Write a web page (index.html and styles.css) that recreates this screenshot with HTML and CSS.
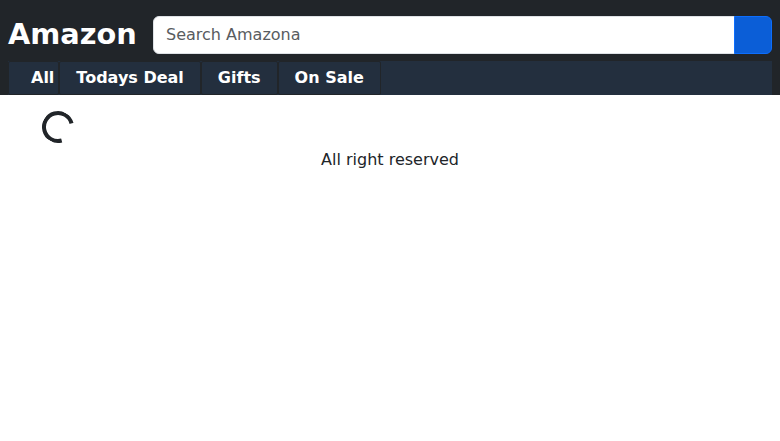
FILE: index.html
```
<!DOCTYPE html>
<html lang="en">
<head>
<meta charset="utf-8">
<title>Amazon</title>
<link rel="stylesheet" href="styles.css">
</head>
<body>
<header class="header">
  <div class="top">
    <a class="brand">Amazon</a>
    <form class="search">
      <input class="search-input" type="text" placeholder="Search Amazona" aria-label="Search Amazona">
      <button class="search-button" type="button" aria-label="Search"></button>
    </form>
  </div>
  <nav class="subnav">
    <a class="link link-all">All</a>
    <a class="link">Todays Deal</a>
    <a class="link">Gifts</a>
    <a class="link">On Sale</a>
  </nav>
</header>
<main class="main"><div class="spinner"></div></main>
<footer class="footer">All right reserved</footer>
</body>
</html>
```
FILE: styles.css
```
* { box-sizing: border-box; }
body {
  margin: 0;
  font: 400 16px/24px "DejaVu Sans", sans-serif;
  color: #212529;
  background: #fff;
}
.header { height: 95px; padding: 8px 8px 0; background: #212529; }
.top { display: flex; align-items: center; height: 53px; }
.brand { width: 129px; margin-right: 16px; padding-bottom: 2px; font-size: 28.8px; font-weight: 700; line-height: 42px; color: #fff; }
.search { display: flex; flex: 1; height: 38px; }
.search-input {
  flex: 1;
  min-width: 0;
  padding: 6px 12px;
  border: 1px solid #dee2e6;
  border-radius: 6px 0 0 6px;
  background: #fff;
  font: inherit;
}
.search-input::placeholder { color: #595c5f; opacity: 1; }
.search-button { width: 38px; margin-left: -1px; border: 1px solid #0d6efd; border-radius: 0 6px 6px 0; background: #0b5ed7; }
.subnav { display: flex; height: 34px; background: #232f3e; }
.link { padding: 4px 16px; border: 1px solid #212529; border-radius: 2px; font-weight: 700; color: #fff; }
.link-all { padding-left: 22px; padding-right: 4px; }
.main { height: 53px; padding: 16px 42px; }
.spinner {
  width: 32px;
  height: 32px;
  border: 4px solid #212529;
  border-right-color: transparent;
  border-radius: 50%;
  transform: rotate(30deg);
}
.footer { text-align: center; }
```
